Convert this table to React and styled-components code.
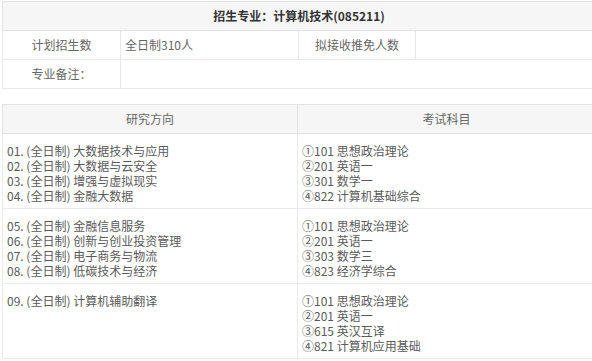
import React from "react";
import styled, { createGlobalStyle } from "styled-components";

const GlobalStyle = createGlobalStyle`
  html, body {
    margin: 0;
    padding: 0;
    background: #fff;
    overflow: hidden;
  }
  body {
    font-family: "Noto Sans CJK SC", "Microsoft YaHei", sans-serif;
    font-size: 12px;
    color: #555;
  }
`;

const Page = styled.div`
  width: 596px;
  padding: 1px 0 0 2px;
  display: flex;
  flex-direction: column;
  gap: 15px;
`;

const Table = styled.table`
  width: 594px;
  border-collapse: collapse;
  table-layout: fixed;
`;

const HeadCell = styled.th`
  height: 28px;
  padding: 0;
  background: #f6f6f6;
  border: 1px solid #e3e3e3;
  font-weight: ${(p) => (p.$bold ? 700 : 400)};
  color: ${(p) => (p.$bold ? "#333" : "#666")};
  text-align: center;
  line-height: 28px;
`;

const InfoCell = styled.td`
  height: 28px;
  padding: 0 4px;
  border: 1px solid #e8e8e8;
  text-align: ${(p) => (p.$label ? "center" : "left")};
  color: #666;
  line-height: 28px;
`;

const BodyCell = styled.td`
  padding: 9px 4px 5px;
  border: 1px solid #ebebeb;
  vertical-align: top;
  line-height: 15px;
  color: #5a5a5a;
`;

const Line = styled.div`
  white-space: nowrap;
`;

const groups = [
  {
    dirs: [
      "01. (全日制) 大数据技术与应用",
      "02. (全日制) 大数据与云安全",
      "03. (全日制) 增强与虚拟现实",
      "04. (全日制) 金融大数据",
    ],
    subjects: ["①101 思想政治理论", "②201 英语一", "③301 数学一", "④822 计算机基础综合"],
  },
  {
    dirs: [
      "05. (全日制) 金融信息服务",
      "06. (全日制) 创新与创业投资管理",
      "07. (全日制) 电子商务与物流",
      "08. (全日制) 低碳技术与经济",
    ],
    subjects: ["①101 思想政治理论", "②201 英语一", "③303 数学三", "④823 经济学综合"],
  },
  {
    dirs: ["09. (全日制) 计算机辅助翻译"],
    subjects: ["①101 思想政治理论", "②201 英语一", "③615 英汉互译", "④821 计算机应用基础"],
  },
];

const App = () => {
  return (
    <Page>
      <GlobalStyle />
      <Table>
        <colgroup>
          <col style={{ width: 118 }} />
          <col style={{ width: 178 }} />
          <col style={{ width: 117 }} />
          <col />
        </colgroup>
        <thead>
          <tr>
            <HeadCell colSpan={4} $bold>
              招生专业：计算机技术(085211)
            </HeadCell>
          </tr>
        </thead>
        <tbody>
          <tr>
            <InfoCell $label>计划招生数</InfoCell>
            <InfoCell>全日制310人</InfoCell>
            <InfoCell $label>拟接收推免人数</InfoCell>
            <InfoCell></InfoCell>
          </tr>
          <tr>
            <InfoCell $label>专业备注：</InfoCell>
            <InfoCell colSpan={3}></InfoCell>
          </tr>
        </tbody>
      </Table>

      <Table>
        <colgroup>
          <col style={{ width: 295 }} />
          <col />
        </colgroup>
        <thead>
          <tr>
            <HeadCell>研究方向</HeadCell>
            <HeadCell>考试科目</HeadCell>
          </tr>
        </thead>
        <tbody>
          {groups.map((g, i) => (
            <tr key={i}>
              <BodyCell>
                {g.dirs.map((d) => (
                  <Line key={d}>{d}</Line>
                ))}
              </BodyCell>
              <BodyCell>
                {g.subjects.map((s) => (
                  <Line key={s}>{s}</Line>
                ))}
              </BodyCell>
            </tr>
          ))}
        </tbody>
      </Table>
    </Page>
  );
};

export default App;
